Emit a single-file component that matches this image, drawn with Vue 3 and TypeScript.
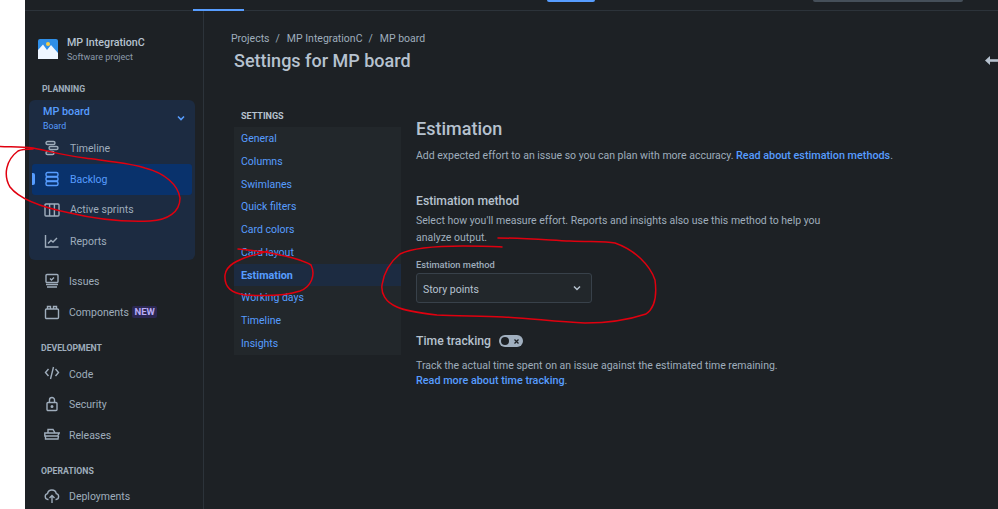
<script setup lang="ts">
const settings: string[] = ['General', 'Columns', 'Swimlanes', 'Quick filters', 'Card colors', 'Card layout', 'Estimation', 'Working days', 'Timeline', 'Insights']
</script>

<template>
  <div class="page">
    <div class="app">
      <header class="topbar">
        <span class="tab-a"></span>
        <span class="tab-b"></span>
        <span class="search"></span>
      </header>
      <div class="body">
        <aside class="sidebar">
          <div class="project">
            <svg class="logo" width="20" height="20" viewBox="0 0 20 20">
              <rect width="20" height="20" rx="2" fill="#2f8fe8" />
              <circle cx="10" cy="5" r="2" fill="#f5cd47" />
              <path d="M0 20V11L5 5.5 9 11l4-5 7 8v6z" fill="#eef6ff" />
            </svg>
            <div>
              <div class="project-name">MP IntegrationC</div>
              <div class="project-type">Software project</div>
            </div>
          </div>
          <div class="section first">PLANNING</div>
          <div class="group">
            <div class="group-head">
              <div>
                <div class="board-name">MP board</div>
                <div class="board-sub">Board</div>
              </div>
              <svg width="10" height="10" viewBox="0 0 10 10" class="chev"><path d="M2 3.5 5 6.5 8 3.5" fill="none" stroke="#579dff" stroke-width="1.6" /></svg>
            </div>
            <div class="nav in-group">
              <svg class="ic" viewBox="0 0 16 16"><rect x="2" y="1.5" width="9" height="3" rx="1.5" /><rect x="5" y="6.5" width="9" height="3" rx="1.5" /><rect x="2" y="11.5" width="8" height="3" rx="1.5" /></svg>
              <span>Timeline</span>
            </div>
            <div class="nav in-group active">
              <i class="marker"></i>
              <svg class="ic" viewBox="0 0 16 16"><rect x="2" y="1.5" width="12" height="4" rx="1.5" /><rect x="2" y="6" width="12" height="4" rx="1.5" /><rect x="2" y="10.5" width="12" height="4" rx="1.5" /></svg>
              <span>Backlog</span>
            </div>
            <div class="nav in-group">
              <svg class="ic" viewBox="0 0 16 16"><rect x="1" y="2" width="14" height="12" rx="1" /><path d="M5.6 2v12M10.4 2v12" /></svg>
              <span>Active sprints</span>
            </div>
            <div class="nav in-group">
              <svg class="ic" viewBox="0 0 16 16"><path d="M1.5 2v12h13" /><path d="M4 10.5 7 7.5l2 1.5 4-4" /></svg>
              <span>Reports</span>
            </div>
          </div>
          <div class="nav plain first-plain">
            <svg class="ic" viewBox="0 0 16 16"><rect x="2" y="1.5" width="12" height="8" rx="1" /><path d="M6 5.5l1.5 1.5L10 4.5M2 11.500h12M3 14h10" /></svg>
            <span>Issues</span>
          </div>
          <div class="nav plain">
            <svg class="ic" viewBox="0 0 16 16"><rect x="1.5" y="5" width="13" height="9.5" rx="1" /><path d="M3.5 5V2.5h3V5M9.5 5V2.5h3V5" /></svg>
            <span>Components</span><b class="new">NEW</b>
          </div>
          <div class="section dev">DEVELOPMENT</div>
          <div class="nav plain tight">
            <svg class="ic" viewBox="0 0 16 16"><path d="M4.500 4 1.500 7.500l3 3.500M11.500 4l3 3.500-3 3.500M9.500 2 6.500 14" /></svg>
            <span>Code</span>
          </div>
          <div class="nav plain tight">
            <svg class="ic" viewBox="0 0 16 16"><rect x="3" y="6.500" width="10" height="8" rx="1" /><path d="M5.500 6.500V4a2.500 2.500 0 0 1 5 0v2.500" /><circle cx="8" cy="10.500" r=".8" /></svg>
            <span>Security</span>
          </div>
          <div class="nav plain tight">
            <svg class="ic" viewBox="0 0 16 16"><path d="M4 7V3.500h5L11 7M.8 7h14.400l-1.500 3H.8zM1.500 10v3h12.500l.5-3" /></svg>
            <span>Releases</span>
          </div>
          <div class="section ops">OPERATIONS</div>
          <div class="nav plain tight">
            <svg class="ic" viewBox="0 0 16 16"><path d="M4.500 11.500H4A3 3 0 0 1 3.500 5.600 4.500 4.500 0 0 1 12.300 5.600 3 3 0 0 1 12 11.500h-.5" /><path d="M8 15V7.500M5.500 10 8 7.500 10.500 10" /></svg>
            <span>Deployments</span>
          </div>
        </aside>

        <main class="main">
          <nav class="crumbs">
            <span>Projects</span><i>/</i><span>MP IntegrationC</span><i>/</i><span>MP board</span>
          </nav>
          <div class="title-row">
            <h1>Settings for MP board</h1>
            <svg class="back" width="13" height="9" viewBox="0 0 13 9"><path d="M5 0v9L0 4.500z" fill="#b6c2cf" /><path d="M4 3.200h9v2.600H4z" fill="#b6c2cf" /></svg>
          </div>
          <div class="columns">
            <div class="side">
              <div class="side-label">SETTINGS</div>
              <ul class="side-list">
                <li v-for="s in settings" :key="s" :class="{ current: s === 'Estimation' }">{{ s }}</li>
              </ul>
            </div>
            <section class="content">
              <h2>Estimation</h2>
              <p class="lead">Add expected effort to an issue so you can plan with more accuracy. <a>Read about estimation methods</a>.</p>
              <h3>Estimation method</h3>
              <p class="desc">Select how you'll measure effort. Reports and insights also use this method to help you analyze output.</p>
              <label class="field-label">Estimation method</label>
              <div class="select">
                <span>Story points</span>
                <svg width="10" height="10" viewBox="0 0 10 10"><path d="M2 3.500 5 6.500 8 3.500" fill="none" stroke="#b6c2cf" stroke-width="1.500" /></svg>
              </div>
              <div class="tt">
                <h3>Time tracking</h3>
                <span class="toggle"><i class="knob"></i><svg width="7" height="7" viewBox="0 0 7 7"><path d="M1.500 1.500l4 4M5.500 1.500l-4 4" stroke="#1d2125" stroke-width="1.300" /></svg></span>
              </div>
              <p class="track">Track the actual time spent on an issue against the estimated time remaining.<br /><a>Read more about time tracking</a>.</p>
            </section>
          </div>
        </main>
      </div>
    </div>
    <svg class="ink" width="998" height="509" viewBox="0 0 998 509" fill="none" stroke="#e0000f" stroke-width="1.500" stroke-linecap="round" stroke-linejoin="round">
      <path d="M0 146.500C12 147 22 147 33 148C50 151 60 155 85 158C115 162 135 164 145 168C165 173 178 185 180 198C180 212 168 220 150 221C125 222 95 219 70 213C45 208 20 200 10 187C3 175 6 160 18 151C22 149 26 149 33 149" />
      <path d="M238 249C248 250 258 251 265 252C280 255 300 258 311 265C316 275 311 287 300 291C285 296 262 296 245 295C232 293 224 288 225 275C226 265 238 260 250 256C258 254 264 252 268 251" />
      <path d="M498 238C525 238 548 240 570 241C590 242 605 241 615 243C635 250 650 265 655 280C657 295 655 308 646 314C625 321 605 323 585 323C555 322 530 318 503 317C480 316 455 316 437 315C420 313 405 311 397 307C385 302 381 293 382 285C384 272 390 262 400 254C412 248 440 246 463 246C478 246 492 246 502 247" />
    </svg>
  </div>
</template>

<style>
html, body { margin: 0; background: #fff; }
</style>

<style scoped>
.page {
  position: relative;
  width: 998px;
  height: 509px;
  overflow: hidden;
  background: #fff;
  padding-left: 25px;
  box-sizing: border-box;
  font-family: Roboto, "Noto Sans", sans-serif;
  font-size: 10.500px;
  color: #9fadbc;
}
.app {
  height: 509px;
  background: #1d2125;
  display: flex;
  flex-direction: column;
}
.topbar {
  height: 11px;
  flex: none;
  box-sizing: border-box;
  border-bottom: 1px solid #2c333a;
  display: flex;
  position: relative;
}
.tab-a {
  position: absolute;
  left: 168px;
  width: 51px;
  bottom: -1px;
  height: 2px;
  background: #579dff;
}
.tab-b {
  position: absolute;
  left: 522px;
  width: 48px;
  top: 0;
  height: 2px;
  border-radius: 0 0 2px 2px;
  background: #579dff;
}
.search {
  position: absolute;
  left: 788px;
  width: 150px;
  top: 0;
  height: 2px;
  border-radius: 0 0 3px 3px;
  background: #454f59;
}
.body {
  flex: 1;
  display: flex;
  min-height: 0;
}
.sidebar {
  width: 179px;
  flex: none;
  box-sizing: border-box;
  border-right: 1px solid #2c333a;
  padding: 0 8px 0 4px;
  overflow: hidden;
}
.project {
  display: flex;
  align-items: center;
  gap: 9px;
  padding: 23px 0 0 9px;
  height: 31px;
}
.logo { flex: none; margin-top: -2px; }
.project-name { font-size: 10.700px; font-weight: 500; color: #b6c2cf; line-height: 15px; padding-top: 1px; }
.project-type { font-size: 9px; color: #8c9bab; line-height: 15px; }
.section {
  font-size: 8.700px;
  font-weight: 700;
  color: #9fadbc;
  line-height: 14px;
  padding-left: 12px;
}
.section.first { margin-top: 17px; margin-bottom: -1px; padding-left: 13px; }
.section.dev { margin-top: 14px; margin-bottom: 3px; }
.section.ops { margin-top: 14px; margin-bottom: 3px; }
.group {
  margin-top: 5px;
  height: 160px;
  background: #1c2b41;
  border-radius: 6px;
  box-sizing: border-box;
  padding: 3px 3px 0;
}
.group-head {
  height: 30px;
  padding-left: 11px;
  display: flex;
  justify-content: space-between;
  align-items: center;
  padding-right: 6px;
}
.board-name { font-size: 10.800px; font-weight: 500; color: #579dff; line-height: 15px; padding-top: 1px; }
.board-sub { font-size: 8.800px; color: #579dff; line-height: 15px; }
.nav {
  position: relative;
  display: flex;
  align-items: center;
  height: 31px;
  font-size: 10.500px;
  color: #9fadbc;
}
.nav span { padding-top: 2px; }
.nav.in-group span { padding-top: 0; }
.nav.in-group:last-child span { padding-top: 2px; }
.nav .ic {
  width: 16px;
  height: 16px;
  flex: none;
  fill: none;
  stroke: #9fadbc;
  stroke-width: 1.400;
}
.nav.in-group { padding-left: 12px; gap: 10px; height: 30.800px; border-radius: 3px; }
.nav.active {
  background: #09326c;
  color: #579dff;
}
.nav.active .ic { stroke: #579dff; }
.marker {
  position: absolute;
  left: 0;
  top: 9px;
  width: 3px;
  height: 12px;
  border-radius: 0 2px 2px 0;
  background: #579dff;
}
.nav.plain { padding-left: 15px; gap: 9px; }
.nav.tight { padding-left: 15px; gap: 9px; height: 30.500px; }
.first-plain { margin-top: 5px; }
.new {
  margin-left: -6px;
  padding: 0 2.500px;
  font-size: 9.500px;
  line-height: 12px;
  font-weight: 700;
  color: #b8acf6;
  background: #2b2752;
  border-radius: 2px;
}
.main {
  flex: 1;
  min-width: 0;
  padding-left: 27px;
}
.crumbs {
  margin-top: 19px;
  height: 17px;
  line-height: 17px;
  display: flex;
  font-size: 10.500px;
  color: #9fadbc;
}
.crumbs i { font-style: normal; margin: 0 7px 0 6px; }
.title-row {
  display: flex;
  justify-content: space-between;
  align-items: center;
  height: 25px;
  margin-top: 1px;
  padding-left: 3px;
}
h1 {
  margin: 0;
  font-size: 18px;
  font-weight: 500;
  color: #b6c2cf;
  line-height: 25px;
}
.columns {
  display: flex;
  margin-top: 36px;
}
.side {
  width: 167px;
  margin-left: 3px;
  flex: none;
}
.side-label {
  font-size: 9px;
  font-weight: 700;
  color: #b6c2cf;
  line-height: 14px;
  padding-left: 7px;
  height: 18px;
}
.side-list {
  list-style: none;
  margin: 0;
  padding: 0;
  background: #22272b;
}
.side-list li {
  height: 22.750px;
  line-height: 24px;
  padding-left: 7px;
  font-size: 10.500px;
  color: #579dff;
  overflow: hidden;
}
.side-list li.current {
  background: #1c2b41;
  font-weight: 700;
  font-size: 10.800px;
}
.content {
  margin-left: 15px;
  width: 520px;
}
h2 {
  margin: 0;
  padding-top: 7px;
  font-size: 18px;
  font-weight: 500;
  color: #b6c2cf;
  line-height: 25px;
}
p { margin: 0; }
.lead { margin-top: 6px; line-height: 17px; white-space: nowrap; }
a { color: #579dff; font-weight: 500; font-size: 10.800px; }
h3 {
  margin: 0;
  font-size: 12.200px;
  font-weight: 500;
  color: #b6c2cf;
  line-height: 18px;
}
.content > h3 { margin-top: 28px; }
.desc { width: 420px; margin-top: 2px; line-height: 17px; }
.field-label {
  display: block;
  margin-top: 12px;
  font-size: 9.300px;
  font-weight: 500;
  line-height: 14px;
  color: #9fadbc;
}
.select {
  margin-top: 1px;
  width: 176px;
  height: 30px;
  box-sizing: border-box;
  background: #22272b;
  border: 1px solid #38414a;
  border-radius: 3px;
  display: flex;
  align-items: center;
  justify-content: space-between;
  padding: 0 9px 0 6px;
  color: #b6c2cf;
}
.select span { padding-top: 2px; }
.tt {
  display: flex;
  align-items: center;
  gap: 8px;
  margin-top: 29px;
}
.toggle {
  position: relative;
  width: 24px;
  height: 12px;
  border-radius: 6px;
  background: #a1b0c0;
  display: flex;
  align-items: center;
  justify-content: flex-end;
  padding-right: 3px;
  box-sizing: border-box;
}
.knob {
  position: absolute;
  left: 2px;
  top: 2px;
  width: 8px;
  height: 8px;
  border-radius: 50%;
  background: #1d2125;
}
.track { margin-top: 8px; line-height: 15px; }
.ink {
  position: absolute;
  left: 0;
  top: 0;
  pointer-events: none;
}
</style>
